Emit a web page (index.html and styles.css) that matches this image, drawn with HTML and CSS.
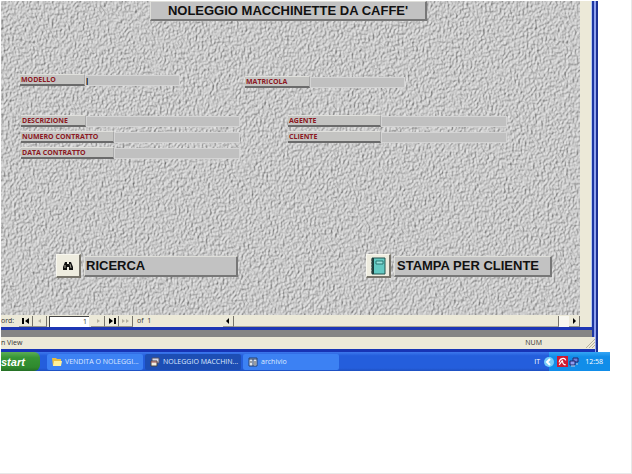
FILE: index.html
```
<!DOCTYPE html>
<html lang="it">
<head>
<meta charset="utf-8">
<title>Noleggio macchinette da caffè</title>
<link rel="stylesheet" href="styles.css">
</head>
<body>
<div class="desktop">
  <main class="window">
    <form class="form">
      <svg class="texture" aria-hidden="true">
        <filter id="stucco" x="0" y="0" width="100%" height="100%" color-interpolation-filters="sRGB">
          <feTurbulence type="fractalNoise" baseFrequency="0.48 0.36" numOctaves="3" seed="8" result="noise"/>
          <feDiffuseLighting in="noise" surfaceScale="1.2" diffuseConstant="1.09" lighting-color="#d2d2d2">
            <feDistantLight azimuth="215" elevation="62"/>
          </feDiffuseLighting>
        </filter>
        <rect width="100%" height="100%" filter="url(#stucco)"/>
      </svg>
      <h1 class="title">NOLEGGIO MACCHINETTE DA CAFFE'</h1>
      <div class="row first">
        <div class="field short"><label for="modello">MODELLO</label><input id="modello" class="current" type="text" value="|"></div>
        <div class="field short"><label for="matricola">MATRICOLA</label><input id="matricola" type="text"></div>
      </div>
      <div class="row details">
        <div class="group">
          <div class="field short"><label for="descrizione">DESCRIZIONE</label><input id="descrizione" type="text"></div>
          <div class="field"><label for="numero">NUMERO CONTRATTO</label><input id="numero" type="text"></div>
          <div class="field"><label for="data">DATA CONTRATTO</label><input id="data" type="text"></div>
        </div>
        <div class="group">
          <div class="field"><label for="agente">AGENTE</label><input id="agente" type="text"></div>
          <div class="field"><label for="cliente">CLIENTE</label><input id="cliente" type="text"></div>
        </div>
      </div>
      <div class="row actions">
        <div class="action">
          <button type="button" aria-labelledby="ricerca">
            <svg width="12" height="12" viewBox="0 0 12 12"><path d="M3 2h2v2h2V2h2l2 5v3H7V7H5v3H1V7z" fill="#111"/><path d="M3 5v3M8 4l1 4" stroke="#aaa89a"/></svg>
          </button>
          <span class="caption" id="ricerca">RICERCA</span>
        </div>
        <div class="action">
          <button type="button" aria-labelledby="stampa">
            <svg width="16" height="18" viewBox="0 0 16 18"><path d="M2 1h13v16H2z" fill="#63c9c2" stroke="#23524f"/><path d="M3 1v16" stroke="#173c3a" stroke-width="2"/><path d="M1 3h2M1 6h2M1 9h2M1 12h2M1 15h2" stroke="#444"/><path d="M6 4h7v3H6z" fill="#9be5df" stroke="#2b7773"/></svg>
          </button>
          <span class="caption" id="stampa">STAMPA PER CLIENTE</span>
        </div>
      </div>
    </form>
    <nav class="records">
      <label for="record">ord:</label>
      <button type="button" aria-label="Primo"><svg width="8" height="8" viewBox="0 0 8 8"><path d="M0 1h2v6H0zM7 1v6L3 4z"/></svg></button>
      <button type="button" aria-label="Precedente" disabled><svg width="8" height="8" viewBox="0 0 8 8"><path d="M5 2v4L2 4z"/></svg></button>
      <input id="record" type="text" value="1">
      <button type="button" aria-label="Successivo" disabled><svg width="8" height="8" viewBox="0 0 8 8"><path d="M3 2v4l3-2z"/></svg></button>
      <button type="button" aria-label="Ultimo"><svg width="8" height="8" viewBox="0 0 8 8"><path d="M1 1v6l4-3zM6 1h2v6H6z"/></svg></button>
      <button type="button" aria-label="Nuovo" disabled><svg width="8" height="8" viewBox="0 0 8 8"><path d="M0 2v4l3-2zM4 2v4l3-2z"/></svg></button>
      <span class="count">of&nbsp; 1</span>
      <div class="scroll">
        <button type="button" aria-label="Sinistra"><svg width="8" height="8" viewBox="0 0 8 8"><path d="M5 1v6L2 4z"/></svg></button>
        <span class="thumb"></span>
        <button type="button" aria-label="Destra"><svg width="8" height="8" viewBox="0 0 8 8"><path d="M3 1v6l3-3z"/></svg></button>
      </div>
    </nav>
    <div class="gutter"></div>
    <footer class="status">
      <span>n View</span>
      <span class="num">NUM</span>
      <svg width="10" height="10" viewBox="0 0 10 10"><path d="M1 10l9-9M4 10l6-6M7 10l3-3" stroke="#b5b09c" fill="none"/></svg>
    </footer>
  </main>
  <div class="taskbar">
    <button class="start" type="button">start</button>
    <button class="task" type="button">
      <svg width="10" height="10" viewBox="0 0 10 10"><path d="M0 1h4l1 1h4v7H1z" fill="#e9bd3e"/><path d="M2 4h8L9 9H1z" fill="#fff09a"/></svg>
      VENDITA O NOLEGGI...
    </button>
    <button class="task active" type="button">
      <svg width="10" height="10" viewBox="0 0 10 10"><path d="M2 1h7v5H2z" fill="#d8d8e8" stroke="#556"/><path d="M1 4h6v5H1z" fill="#f2eee0" stroke="#444"/><path d="M1 5h6" stroke="#9a4848"/></svg>
      NOLEGGIO MACCHIN...
    </button>
    <button class="task" type="button">
      <svg width="10" height="10" viewBox="0 0 10 10"><path d="M1 1h8v8H1z" fill="#dfe6ee" stroke="#27406f"/><path d="M1 2h8M5 2v7" stroke="#27406f"/><path d="M2 5h2M6 5h2M6 7h2" stroke="#555"/></svg>
      archivio
    </button>
    <span class="lang">IT</span>
    <div class="tray">
      <svg class="chevron" width="10" height="10" viewBox="0 0 10 10"><circle cx="5" cy="5" r="5" fill="#75cdf8"/><path d="M6 2L3 5l3 3" stroke="#fff" stroke-width="2" fill="none"/></svg>
      <svg width="11" height="11" viewBox="0 0 10 10"><path d="M0 0h10v10H0z" fill="#cf1931"/><path d="M2 6C2 2 7 1 8 4M5 4L2 8M5 4c0 2 1 4 3 4" stroke="#fff" fill="none"/></svg>
      <svg width="10" height="10" viewBox="0 0 10 10"><path d="M4 1h5v4H4z" fill="#6d80dc" stroke="#20246c"/><path d="M1 4h5v4H1z" fill="#8e9df0" stroke="#20246c"/><path d="M2 9h4M7 7h2" stroke="#c9c9dd"/></svg>
      <time>12:58</time>
    </div>
  </div>
</div>
</body>
</html>
```

FILE: styles.css
```
* { box-sizing: border-box; }
body {
  margin: 0;
  min-height: 100vh;
  padding: 1px;
  background: #fff;
  border-right: 1px solid #e8e8e8;
  border-bottom: 1px solid #e8e8e8;
  font: 7px/10px "Open Sans", "Liberation Sans", sans-serif;
  color: #333;
}
button, input { font: inherit; color: inherit; margin: 0; padding: 0; border: 0; min-width: 0; }
button { display: flex; align-items: center; justify-content: center; }
svg { display: block; flex: none; }
.desktop { margin-right: 20px; }
.window {
  margin-right: 12px;
  background: #ece9d8;
  border-right: 2px solid #1c3194;
  box-shadow: inset -2px 0 #8fa2ee, inset -4px 0 #1d36a4, inset -5px 0 #b9cdf0;
}
.form {
  position: relative;
  margin-right: 16px;
  padding-bottom: 37px;
  background: #c2c2c2;
  overflow: hidden;
}
.texture { position: absolute; inset: 0; width: 100%; height: 100%; }
.title, .row { position: relative; }
.title, .caption {
  background: #c2c2c2;
  border: 1px solid #deded9;
  border-right: 2px solid #777;
  border-bottom: 2px solid #777;
  font: bold 13px/17px "Liberation Sans", sans-serif;
  color: #111;
}
.title { width: 277px; margin: 0 auto 0 149px; text-align: center; }
.row { display: flex; }
.first { margin-top: 53px; padding-left: 19px; gap: 65px; }
.first .field { width: 160px; }
.first .field:last-child { margin-top: 2px; }
.details { margin-top: 27px; padding-left: 20px; gap: 48px; }
.group { display: grid; gap: 4px; width: 219px; align-content: start; }
.field { display: grid; grid-template-columns: 93px 1fr; align-items: center; }
.first .field { align-self: flex-start; }
.field.short { grid-template-columns: 65px 1fr; }
.field label {
  height: 12px;
  padding-left: 1px;
  background: #c4c4c2;
  border-top: 1px solid #e0e0dc;
  border-right: 1px solid #aaa;
  border-bottom: 2px solid #6b6b6b;
  font-weight: bold;
  line-height: 9px;
  color: #8c1822;
  white-space: nowrap;
}
.field input {
  width: 100%;
  height: 11px;
  background: #c0c0c0;
  border: 1px solid #d4d4d4;
  color: #111;
}
.field .current { font: bold 8px/9px "Liberation Sans", sans-serif; }
.actions { margin-top: 95px; padding-left: 55px; gap: 128px; }
.action { display: flex; align-items: center; gap: 3px; }
.action button {
  width: 25px;
  height: 24px;
  background: #eeecdf;
  border: 1px solid #f8f7ef;
  border-right: 2px solid #77746b;
  border-bottom: 2px solid #77746b;
}
.caption { width: 154px; height: 21px; padding-left: 1px; line-height: 18px; white-space: nowrap; }
.action:last-child .caption { width: 158px; padding-left: 2px; }
.records {
  display: flex;
  align-items: center;
  height: 12px;
  margin-right: 16px;
}
.records label { width: 18px; }
.records button {
  width: 14px;
  height: 11px;
  background: #ece9d8;
  border-right: 1px solid #77746b;
  border-bottom: 1px solid #99968a;
}
.records button:disabled { fill: #b4b0a0; }
.records input {
  width: 40px;
  height: 11px;
  margin: 0 2px;
  padding-right: 2px;
  background: #fff;
  border-top: 1px solid #444;
  border-left: 1px solid #444;
  text-align: right;
}
.count { width: 90px; padding-left: 4px; }
.scroll { display: flex; flex: 1; justify-content: space-between; background: #f8f7f0; }
.scroll button { width: 11px; }
.thumb { flex: 1; margin-right: 10px; background: #ece9d8; border-right: 1px solid #77746b; border-bottom: 1px solid #aaa798; }
.gutter { height: 10px; margin-right: 4px; background: #858585; border-top: 3px solid #1d36b4; }
.status {
  display: flex;
  align-items: center;
  height: 15px;
  margin-right: 1px;
  background: #ece9d8;
  border-bottom: 3px solid #1734b5;
}
.num { margin-left: auto; margin-right: 43px; }
.taskbar {
  display: flex;
  align-items: stretch;
  height: 19px;
  background: linear-gradient(#3d78ed, #245edc 20%, #245edc 85%, #1d4fc0);
  color: #fff;
}
.start {
  width: 39px;
  margin-right: 6px;
  justify-content: flex-start;
  background: linear-gradient(#5cad56, #369535 30%, #2f892e 80%, #256f25);
  border-radius: 0 6px 6px 0;
  font: italic bold 11px/16px "Liberation Sans", sans-serif;
}
.task {
  width: 96px;
  margin: 2px 1px 1px;
  padding-left: 5px;
  justify-content: flex-start;
  gap: 3px;
  background: #3c81f3;
  border-radius: 2px;
  color: #dce9ff;
  white-space: nowrap;
}
.task.active { background: #1d4eb4; }
.lang { margin: auto 9px auto auto; }
.tray {
  display: flex;
  align-items: center;
  gap: 1px;
  padding-right: 7px;
  background: linear-gradient(#35a6f5, #118de9 25%, #118de9);
}
.tray time { margin-left: 5px; }
.tray .chevron { margin-left: -5px; margin-right: 2px; }
```
